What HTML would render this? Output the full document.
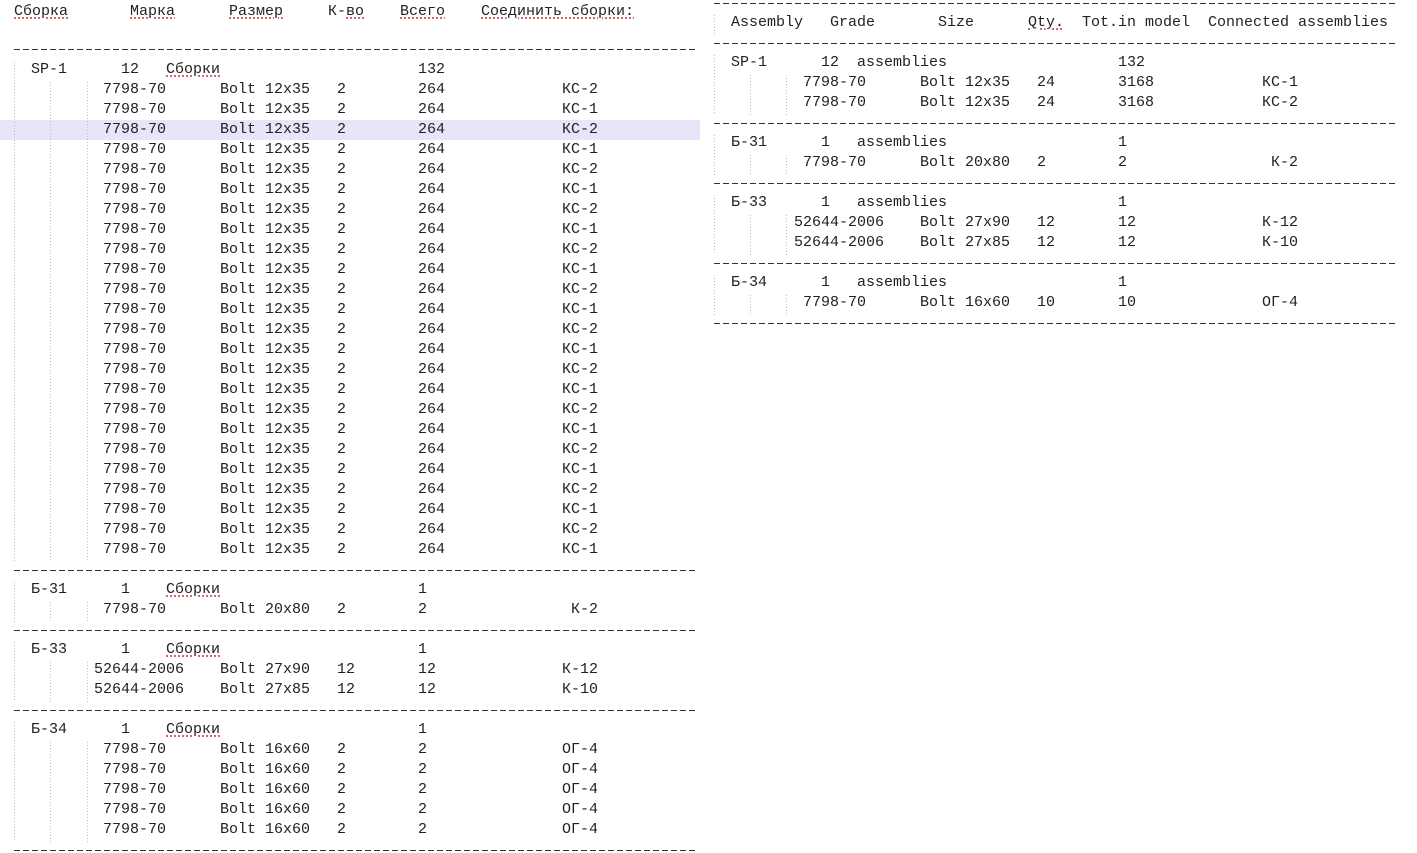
<!DOCTYPE html>
<html><head><meta charset="utf-8"><style>
html,body{margin:0;padding:0;background:#fff;width:1417px;height:853px;overflow:hidden;position:relative}
body{font-family:"Liberation Mono","DejaVu Sans Mono",monospace;font-size:15px;color:#222;letter-spacing:0}
.r{position:absolute;left:0;width:1417px;height:16px;line-height:16px}
.r span{position:absolute;white-space:pre}
.u{text-decoration:underline dotted #c33;text-underline-offset:3px}
.d{position:absolute;height:1px;background:repeating-linear-gradient(90deg,#333 0 6px,transparent 6px 9px)}
.v{position:absolute;width:1px;background:repeating-linear-gradient(180deg,#bbb 0 1px,transparent 1px 3px)}
.hl{position:absolute;left:0;top:120px;width:700px;height:20px;background:#e6e6f8}
</style></head><body>
<div class="hl"></div>

<!-- LEFT -->
<div class="r" style="top:4px"><span class="u" style="left:14px">Сборка</span><span class="u" style="left:130px">Марка</span><span class="u" style="left:229px">Размер</span><span style="left:328px">К-<span class="u" style="position:static">во</span></span><span class="u" style="left:400px">Всего</span><span class="u" style="left:481px">Соединить сборки:</span></div>
<div class="d" style="left:14px;width:682px;top:49px"></div>

<div class="v" style="left:14px;top:62px;height:500px"></div>
<div class="v" style="left:50px;top:82px;height:480px"></div>
<div class="v" style="left:87px;top:82px;height:480px"></div>
<div class="r" style="top:62px"><span style="left:31px">SP-1</span><span style="left:121px">12</span><span class="u" style="left:166px">Сборки</span><span style="left:418px">132</span></div>
<div class="r" style="top:82px"><span style="left:103px">7798-70</span><span style="left:220px">Bolt 12x35</span><span style="left:337px">2</span><span style="left:418px">264</span><span style="left:562px">КС-2</span></div>
<div class="r" style="top:102px"><span style="left:103px">7798-70</span><span style="left:220px">Bolt 12x35</span><span style="left:337px">2</span><span style="left:418px">264</span><span style="left:562px">КС-1</span></div>
<div class="r" style="top:122px"><span style="left:103px">7798-70</span><span style="left:220px">Bolt 12x35</span><span style="left:337px">2</span><span style="left:418px">264</span><span style="left:562px">КС-2</span></div>
<div class="r" style="top:142px"><span style="left:103px">7798-70</span><span style="left:220px">Bolt 12x35</span><span style="left:337px">2</span><span style="left:418px">264</span><span style="left:562px">КС-1</span></div>
<div class="r" style="top:162px"><span style="left:103px">7798-70</span><span style="left:220px">Bolt 12x35</span><span style="left:337px">2</span><span style="left:418px">264</span><span style="left:562px">КС-2</span></div>
<div class="r" style="top:182px"><span style="left:103px">7798-70</span><span style="left:220px">Bolt 12x35</span><span style="left:337px">2</span><span style="left:418px">264</span><span style="left:562px">КС-1</span></div>
<div class="r" style="top:202px"><span style="left:103px">7798-70</span><span style="left:220px">Bolt 12x35</span><span style="left:337px">2</span><span style="left:418px">264</span><span style="left:562px">КС-2</span></div>
<div class="r" style="top:222px"><span style="left:103px">7798-70</span><span style="left:220px">Bolt 12x35</span><span style="left:337px">2</span><span style="left:418px">264</span><span style="left:562px">КС-1</span></div>
<div class="r" style="top:242px"><span style="left:103px">7798-70</span><span style="left:220px">Bolt 12x35</span><span style="left:337px">2</span><span style="left:418px">264</span><span style="left:562px">КС-2</span></div>
<div class="r" style="top:262px"><span style="left:103px">7798-70</span><span style="left:220px">Bolt 12x35</span><span style="left:337px">2</span><span style="left:418px">264</span><span style="left:562px">КС-1</span></div>
<div class="r" style="top:282px"><span style="left:103px">7798-70</span><span style="left:220px">Bolt 12x35</span><span style="left:337px">2</span><span style="left:418px">264</span><span style="left:562px">КС-2</span></div>
<div class="r" style="top:302px"><span style="left:103px">7798-70</span><span style="left:220px">Bolt 12x35</span><span style="left:337px">2</span><span style="left:418px">264</span><span style="left:562px">КС-1</span></div>
<div class="r" style="top:322px"><span style="left:103px">7798-70</span><span style="left:220px">Bolt 12x35</span><span style="left:337px">2</span><span style="left:418px">264</span><span style="left:562px">КС-2</span></div>
<div class="r" style="top:342px"><span style="left:103px">7798-70</span><span style="left:220px">Bolt 12x35</span><span style="left:337px">2</span><span style="left:418px">264</span><span style="left:562px">КС-1</span></div>
<div class="r" style="top:362px"><span style="left:103px">7798-70</span><span style="left:220px">Bolt 12x35</span><span style="left:337px">2</span><span style="left:418px">264</span><span style="left:562px">КС-2</span></div>
<div class="r" style="top:382px"><span style="left:103px">7798-70</span><span style="left:220px">Bolt 12x35</span><span style="left:337px">2</span><span style="left:418px">264</span><span style="left:562px">КС-1</span></div>
<div class="r" style="top:402px"><span style="left:103px">7798-70</span><span style="left:220px">Bolt 12x35</span><span style="left:337px">2</span><span style="left:418px">264</span><span style="left:562px">КС-2</span></div>
<div class="r" style="top:422px"><span style="left:103px">7798-70</span><span style="left:220px">Bolt 12x35</span><span style="left:337px">2</span><span style="left:418px">264</span><span style="left:562px">КС-1</span></div>
<div class="r" style="top:442px"><span style="left:103px">7798-70</span><span style="left:220px">Bolt 12x35</span><span style="left:337px">2</span><span style="left:418px">264</span><span style="left:562px">КС-2</span></div>
<div class="r" style="top:462px"><span style="left:103px">7798-70</span><span style="left:220px">Bolt 12x35</span><span style="left:337px">2</span><span style="left:418px">264</span><span style="left:562px">КС-1</span></div>
<div class="r" style="top:482px"><span style="left:103px">7798-70</span><span style="left:220px">Bolt 12x35</span><span style="left:337px">2</span><span style="left:418px">264</span><span style="left:562px">КС-2</span></div>
<div class="r" style="top:502px"><span style="left:103px">7798-70</span><span style="left:220px">Bolt 12x35</span><span style="left:337px">2</span><span style="left:418px">264</span><span style="left:562px">КС-1</span></div>
<div class="r" style="top:522px"><span style="left:103px">7798-70</span><span style="left:220px">Bolt 12x35</span><span style="left:337px">2</span><span style="left:418px">264</span><span style="left:562px">КС-2</span></div>
<div class="r" style="top:542px"><span style="left:103px">7798-70</span><span style="left:220px">Bolt 12x35</span><span style="left:337px">2</span><span style="left:418px">264</span><span style="left:562px">КС-1</span></div>
<div class="d" style="left:14px;width:682px;top:570px"></div>

<div class="v" style="left:14px;top:582px;height:40px"></div>
<div class="v" style="left:50px;top:602px;height:20px"></div>
<div class="v" style="left:87px;top:602px;height:20px"></div>
<div class="r" style="top:582px"><span style="left:31px">Б-31</span><span style="left:121px">1</span><span class="u" style="left:166px">Сборки</span><span style="left:418px">1</span></div>
<div class="r" style="top:602px"><span style="left:103px">7798-70</span><span style="left:220px">Bolt 20x80</span><span style="left:337px">2</span><span style="left:418px">2</span><span style="left:571px">К-2</span></div>
<div class="d" style="left:14px;width:682px;top:630px"></div>

<div class="v" style="left:14px;top:642px;height:60px"></div>
<div class="v" style="left:50px;top:662px;height:40px"></div>
<div class="v" style="left:87px;top:662px;height:40px"></div>
<div class="r" style="top:642px"><span style="left:31px">Б-33</span><span style="left:121px">1</span><span class="u" style="left:166px">Сборки</span><span style="left:418px">1</span></div>
<div class="r" style="top:662px"><span style="left:94px">52644-2006</span><span style="left:220px">Bolt 27x90</span><span style="left:337px">12</span><span style="left:418px">12</span><span style="left:562px">К-12</span></div>
<div class="r" style="top:682px"><span style="left:94px">52644-2006</span><span style="left:220px">Bolt 27x85</span><span style="left:337px">12</span><span style="left:418px">12</span><span style="left:562px">К-10</span></div>
<div class="d" style="left:14px;width:682px;top:710px"></div>

<div class="v" style="left:14px;top:722px;height:120px"></div>
<div class="v" style="left:50px;top:742px;height:100px"></div>
<div class="v" style="left:87px;top:742px;height:100px"></div>
<div class="r" style="top:722px"><span style="left:31px">Б-34</span><span style="left:121px">1</span><span class="u" style="left:166px">Сборки</span><span style="left:418px">1</span></div>
<div class="r" style="top:742px"><span style="left:103px">7798-70</span><span style="left:220px">Bolt 16x60</span><span style="left:337px">2</span><span style="left:418px">2</span><span style="left:562px">ОГ-4</span></div>
<div class="r" style="top:762px"><span style="left:103px">7798-70</span><span style="left:220px">Bolt 16x60</span><span style="left:337px">2</span><span style="left:418px">2</span><span style="left:562px">ОГ-4</span></div>
<div class="r" style="top:782px"><span style="left:103px">7798-70</span><span style="left:220px">Bolt 16x60</span><span style="left:337px">2</span><span style="left:418px">2</span><span style="left:562px">ОГ-4</span></div>
<div class="r" style="top:802px"><span style="left:103px">7798-70</span><span style="left:220px">Bolt 16x60</span><span style="left:337px">2</span><span style="left:418px">2</span><span style="left:562px">ОГ-4</span></div>
<div class="r" style="top:822px"><span style="left:103px">7798-70</span><span style="left:220px">Bolt 16x60</span><span style="left:337px">2</span><span style="left:418px">2</span><span style="left:562px">ОГ-4</span></div>
<div class="d" style="left:14px;width:682px;top:850px"></div>

<!-- RIGHT -->
<div class="d" style="left:714px;width:682px;top:3px"></div>
<div class="v" style="left:714px;top:15px;height:20px"></div>
<div class="r" style="top:15px"><span style="left:731px">Assembly</span><span style="left:830px">Grade</span><span style="left:938px">Size</span><span class="u" style="left:1028px">Qty.</span><span style="left:1082px">Tot.in model</span><span style="left:1208px">Connected assemblies</span></div>
<div class="d" style="left:714px;width:682px;top:43px"></div>

<div class="v" style="left:714px;top:55px;height:60px"></div>
<div class="v" style="left:750px;top:75px;height:40px"></div>
<div class="v" style="left:786px;top:75px;height:40px"></div>
<div class="r" style="top:55px"><span style="left:731px">SP-1</span><span style="left:821px">12</span><span style="left:857px">assemblies</span><span style="left:1118px">132</span></div>
<div class="r" style="top:75px"><span style="left:803px">7798-70</span><span style="left:920px">Bolt 12x35</span><span style="left:1037px">24</span><span style="left:1118px">3168</span><span style="left:1262px">КС-1</span></div>
<div class="r" style="top:95px"><span style="left:803px">7798-70</span><span style="left:920px">Bolt 12x35</span><span style="left:1037px">24</span><span style="left:1118px">3168</span><span style="left:1262px">КС-2</span></div>
<div class="d" style="left:714px;width:682px;top:123px"></div>

<div class="v" style="left:714px;top:135px;height:40px"></div>
<div class="v" style="left:750px;top:155px;height:20px"></div>
<div class="v" style="left:786px;top:155px;height:20px"></div>
<div class="r" style="top:135px"><span style="left:731px">Б-31</span><span style="left:821px">1</span><span style="left:857px">assemblies</span><span style="left:1118px">1</span></div>
<div class="r" style="top:155px"><span style="left:803px">7798-70</span><span style="left:920px">Bolt 20x80</span><span style="left:1037px">2</span><span style="left:1118px">2</span><span style="left:1271px">К-2</span></div>
<div class="d" style="left:714px;width:682px;top:183px"></div>

<div class="v" style="left:714px;top:195px;height:60px"></div>
<div class="v" style="left:750px;top:215px;height:40px"></div>
<div class="v" style="left:786px;top:215px;height:40px"></div>
<div class="r" style="top:195px"><span style="left:731px">Б-33</span><span style="left:821px">1</span><span style="left:857px">assemblies</span><span style="left:1118px">1</span></div>
<div class="r" style="top:215px"><span style="left:794px">52644-2006</span><span style="left:920px">Bolt 27x90</span><span style="left:1037px">12</span><span style="left:1118px">12</span><span style="left:1262px">К-12</span></div>
<div class="r" style="top:235px"><span style="left:794px">52644-2006</span><span style="left:920px">Bolt 27x85</span><span style="left:1037px">12</span><span style="left:1118px">12</span><span style="left:1262px">К-10</span></div>
<div class="d" style="left:714px;width:682px;top:263px"></div>

<div class="v" style="left:714px;top:275px;height:40px"></div>
<div class="v" style="left:750px;top:295px;height:20px"></div>
<div class="v" style="left:786px;top:295px;height:20px"></div>
<div class="r" style="top:275px"><span style="left:731px">Б-34</span><span style="left:821px">1</span><span style="left:857px">assemblies</span><span style="left:1118px">1</span></div>
<div class="r" style="top:295px"><span style="left:803px">7798-70</span><span style="left:920px">Bolt 16x60</span><span style="left:1037px">10</span><span style="left:1118px">10</span><span style="left:1262px">ОГ-4</span></div>
<div class="d" style="left:714px;width:682px;top:323px"></div>
</body></html>
